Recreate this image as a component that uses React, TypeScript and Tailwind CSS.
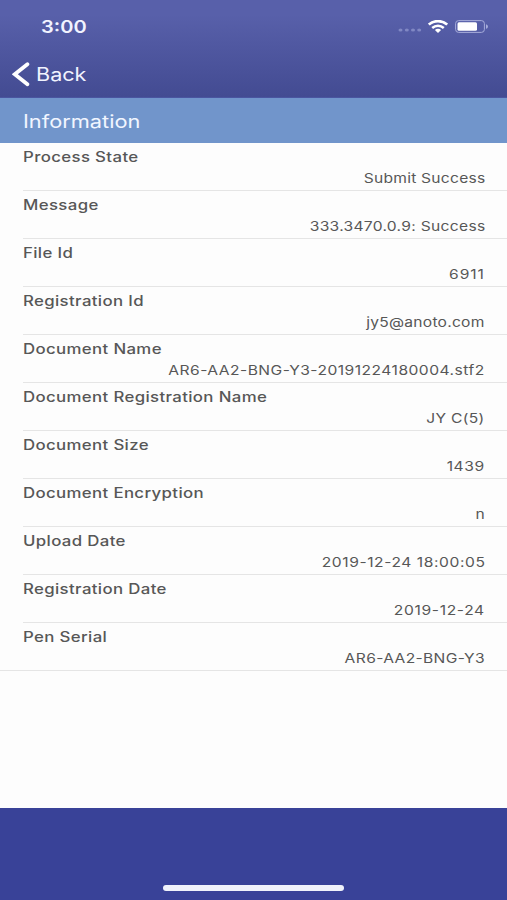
import React from 'react'

const rows = [
  { label: 'Process State', value: 'Submit Success', tracking: 'tracking-[0.2px]' },
  { label: 'Message', value: '333.3470.0.9: Success', tracking: 'tracking-[0.25px]' },
  { label: 'File Id', value: '6911', tracking: 'tracking-[0.8px]' },
  { label: 'Registration Id', value: 'jy5@anoto.com', tracking: 'tracking-[0.2px]' },
  { label: 'Document Name', value: 'AR6-AA2-BNG-Y3-20191224180004.stf2', tracking: 'tracking-[0.4px]' },
  { label: 'Document Registration Name', value: 'JY C(5)', tracking: 'tracking-[0.25px]' },
  { label: 'Document Size', value: '1439', tracking: 'tracking-[0.5px]' },
  { label: 'Document Encryption', value: 'n', tracking: 'tracking-normal' },
  { label: 'Upload Date', value: '2019-12-24 18:00:05', tracking: 'tracking-[0.48px]' },
  { label: 'Registration Date', value: '2019-12-24', tracking: 'tracking-[0.55px]' },
  { label: 'Pen Serial', value: 'AR6-AA2-BNG-Y3', tracking: 'tracking-[0.3px]' },
]

const App = () => {
  return (
    <div className="flex flex-col w-full h-[900px] overflow-hidden bg-[#fdfdfd] font-['Inter',sans-serif]">
      <header className="h-[98px] shrink-0 bg-linear-to-b from-[#5860aa] from-15% to-[#434b92] border-b border-[#4a55a0] text-[#f1f3ff]">
        <div className="flex items-center justify-between h-[52px] pl-[41px] pr-[18px]">
          <span className="inline-block pt-[2px] origin-left scale-x-[1.18] text-[17px] leading-6 font-semibold">3:00</span>
          <div className="flex items-center">
            <svg className="w-6 h-4 mr-[6px]" viewBox="0 0 24 16" fill="#8188c4">
              <ellipse cx="2.5" cy="12" rx="2" ry="1.6" />
              <ellipse cx="8.8" cy="12" rx="2" ry="1.6" />
              <ellipse cx="15" cy="12" rx="2" ry="1.6" />
              <ellipse cx="21.2" cy="12" rx="2" ry="1.6" />
            </svg>
            <svg className="w-5 h-[13px] mr-[7px]" viewBox="0 0 20 13" fill="none" stroke="white">
              <path strokeWidth="2.7" d="M0.8 4.6C6 0 14 0 19.2 4.6" />
              <path strokeWidth="2.5" d="M4.2 8C7.6 5 12.4 5 15.8 8" />
              <path fill="white" stroke="none" d="M6.9 9.9C8.7 8.3 11.3 8.3 13.1 9.9L10 12.9z" />
            </svg>
            <svg className="w-[34px] h-[13px]" viewBox="0 0 34 13">
              <rect x="0.6" y="0.6" width="28.8" height="11.8" rx="3" fill="none" stroke="#a7addb" strokeWidth="1" />
              <rect x="2.5" y="2.3" width="19.5" height="8.4" rx="1.5" fill="white" />
              <path d="M31 4.2C33.6 5 33.6 8 31 8.8z" fill="#a7addb" />
            </svg>
          </div>
        </div>
        <button className="flex items-center h-11 pl-3">
          <svg className="w-[18px] h-[26px]" viewBox="0 0 18 26" fill="none" stroke="white" strokeWidth="3.8" strokeLinecap="round">
            <path d="M15.4 3.2L2.8 13.2L15.4 23.2" />
          </svg>
          <span className="inline-block ml-[6px] pt-[2px] origin-left scale-x-[1.2] text-[18px] leading-6">Back</span>
        </button>
      </header>
      <div className="flex items-center h-[45px] shrink-0 pl-[23px] bg-[#7195cb] text-[#f1f6ff]">
        <span className="inline-block pt-[2px] origin-left scale-x-[1.21] text-[18px] leading-6">Information</span>
      </div>
      <ul className="flex-1">
        {rows.map((row) => (
          <li key={row.label} className="flex flex-col h-12 pr-[22px] ml-[23px] pt-[5px] border-b border-[#e5e5e5] last:ml-0 last:pl-[23px] text-[#575757]">
            <span className="self-start origin-left scale-x-[1.2] text-[14px] leading-[18px] tracking-[0.3px] font-[550] whitespace-nowrap">{row.label}</span>
            <span className={`self-end mt-1 origin-right scale-x-[1.2] text-[13px] leading-4 whitespace-nowrap ${row.tracking}`}>{row.value}</span>
          </li>
        ))}
      </ul>
      <footer className="flex items-end justify-center h-[92px] shrink-0 pb-[9px] bg-[#394298]">
        <div className="w-[181px] h-[6px] rounded-full bg-[#f0f2fb]" />
      </footer>
    </div>
  )
}

export default App
